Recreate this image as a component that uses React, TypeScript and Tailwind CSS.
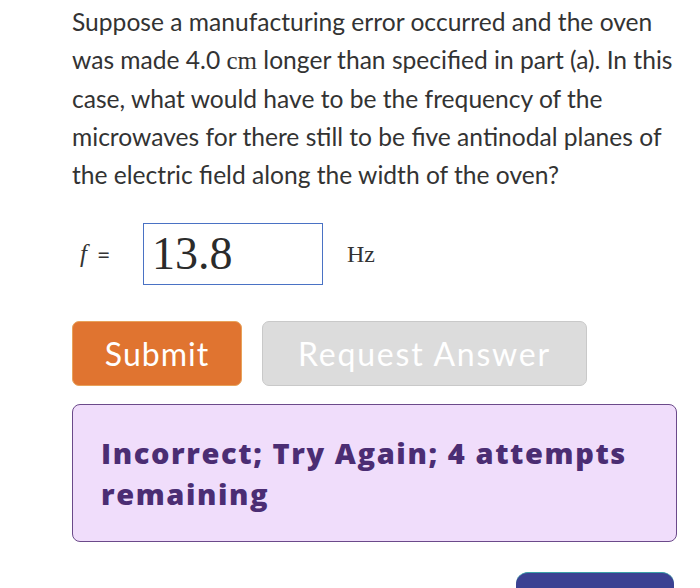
import React from 'react';

const sans = "font-['Lato','Open_Sans',sans-serif]";
const serif = "font-['Liberation_Serif','Times_New_Roman',serif]";

export default function App() {
  return (
    <div className={`w-[700px] h-[588px] overflow-hidden bg-white ${sans}`}>
      <div className="pl-[72px] pr-[10px] pt-[3px]">
        <p className="text-[24.6px] leading-[38px] text-[#333333] whitespace-nowrap">
          Suppose a manufacturing error occurred and the oven
          <br />
          was made 4.0 <span className={`${serif} text-[25px]`}>cm</span> longer than specified in part (a). In this
          <br />
          case, what would have to be the frequency of the
          <br />
          microwaves for there still to be five antinodal planes of
          <br />
          the electric field along the width of the oven?
        </p>

        <div className="mt-[29px] flex items-center">
          <div className="w-[71px] pl-[8px] flex items-center gap-[10px] text-[#333333]">
            <span className={`${serif} italic text-[25px]`}>f</span>
            <span className="text-[23px]">=</span>
          </div>
          <div className="w-[180px] h-[62px] border-[1.5px] border-[#4a72c4] flex items-center pl-[8px]">
            <span className={`${serif} text-[46px] leading-none text-[#2b2b2b]`}>13.8</span>
          </div>
          <span className={`${serif} ml-[24px] text-[24px] text-[#333333]`}>Hz</span>
        </div>

        <div className="mt-[36px] flex gap-[20px]">
          <button className="w-[170px] h-[65px] rounded-[7px] bg-[#e07430] border border-[#e8a25a] text-white text-[32px] tracking-[1px]">
            Submit
          </button>
          <button className="w-[325px] h-[65px] rounded-[7px] bg-[#dcdcdc] border border-[#c9c9c9] text-white text-[32px] tracking-[1.8px]">
            Request Answer
          </button>
        </div>

        <div className="mt-[18px] w-[605px] h-[138px] rounded-[8px] bg-[#f0ddfb] border-[1.5px] border-[#6b4a8a] pl-[28px] pt-[27px]">
          <p className="font-['Open_Sans',sans-serif] text-[29px] leading-[41px] font-extrabold tracking-[1.6px] text-[#4b2d73] whitespace-nowrap">
            Incorrect; Try Again; 4 attempts
            <br />
            remaining
          </p>
        </div>

        <div className="mt-[30px] w-[605px] flex justify-end pr-[3px]">
          <div className="w-[158px] h-[40px] rounded-t-[12px] bg-[#3b4192] border-t border-[#3aa0a8]" />
        </div>
      </div>
    </div>
  );
}
